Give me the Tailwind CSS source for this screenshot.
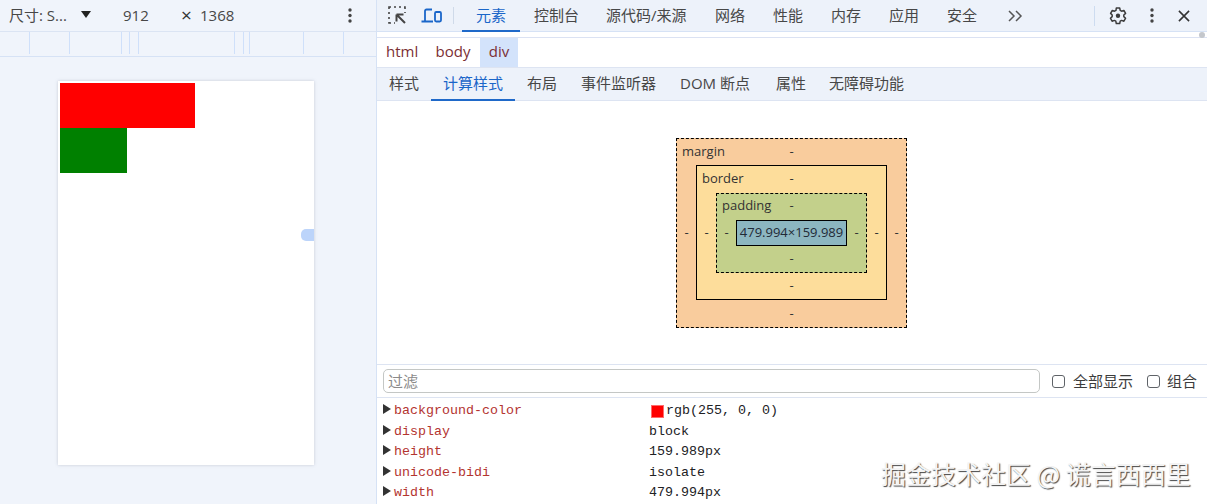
<!DOCTYPE html>
<html lang="en">
  <head>
    <meta charset="UTF-8" />
    <script src="https://cdn.jsdelivr.net/npm/@tailwindcss/browser@4"></script>
    <title>DevTools</title>
  </head>
  <body class="relative flex h-[504px] w-[1207px] overflow-hidden bg-white text-[15px] text-[#474747] font-['Open_Sans','Noto_Sans_CJK_SC',sans-serif]">
    <!-- device pane -->
    <div class="flex h-full w-[376px] flex-col bg-[#f0f4fb]">
      <div class="flex h-[32px] items-center border-b border-[#dbe4f3] pl-[9px]">
        <span class="w-[71px]">尺寸: S...</span>
        <svg class="w-[12px] h-[9px] -translate-y-[1px]" viewBox="0 0 12 9"><path d="M1 1h10L6 8z" fill="#222" /></svg>
        <span class="ml-[31px] w-[58px]">912</span>
        <span class="w-[19px] text-[19px] leading-none text-[#333]">×</span>
        <span>1368</span>
        <svg class="ml-auto mr-[24px] w-[4px] h-[15px]" viewBox="0 0 4 15" fill="#444"><circle cx="2" cy="2" r="1.7" /><circle cx="2" cy="7.5" r="1.7" /><circle cx="2" cy="13" r="1.7" /></svg>
      </div>
      <div class="flex h-[25px] border-b border-[#d6e2f5] pb-[2px]">
        <div class="w-[30px] border-r border-[#cfe0fa]"></div>
        <div class="w-[40px] border-r border-[#cfe0fa]"></div>
        <div class="w-[52px] border-r border-[#cfe0fa]"></div>
        <div class="w-[8px] border-r border-[#cfe0fa]"></div>
        <div class="w-[9px] border-r border-[#cfe0fa]"></div>
        <div class="w-[96px] border-r border-[#cfe0fa]"></div>
        <div class="w-[9px] border-r border-[#cfe0fa]"></div>
        <div class="w-[6px] border-r border-[#cfe0fa]"></div>
        <div class="w-[54px] border-r border-[#cfe0fa]"></div>
        <div class="w-[40px] border-r border-[#cfe0fa]"></div>
      </div>
      <div class="ml-[58px] mt-[24px] h-[384px] w-[256px] bg-white p-[2px] shadow-[0_0_3px_rgba(120,130,150,0.35)]">
        <div class="h-[45px] w-[135px] bg-[#ff0000]"></div>
        <div class="h-[45px] w-[67px] bg-[#008000]"></div>
      </div>
    </div>

    <!-- devtools pane -->
    <div class="flex h-full w-[831px] flex-col border-l border-[#d6e2f5]">
      <div class="flex h-[32px] items-center border-b border-[#d6e2f5] bg-[#edf2fa]">
        <svg class="ml-[11px] w-[19px] h-[19px]" viewBox="0 0 19 19" fill="none" stroke="#444" stroke-width="1.6">
          <path d="M1 3V1h2M6 1h2M11 1h2M16 1h1v2M1 6v2M1 11v2M1 16v1h2M6 17h1M17 6v1" />
          <path d="M8.5 8.5h7M8.5 8.5v7M9 9l8 8" stroke-width="2" />
        </svg>
        <svg class="ml-[14px] w-[21px] h-[16px]" viewBox="0 0 21 16" fill="none" stroke="#1a66c9" stroke-width="1.8">
          <path d="M11 1.5H5.500A1.500 1.500 0 0 0 4 3v10M0.500 13.500H12" />
          <rect x="14" y="4" width="6" height="9.500" rx="1.200" />
        </svg>
        <div class="ml-[11px] h-[17px] w-px bg-[#cfdae9]"></div>
        <div class="relative ml-[8px] flex h-full w-[58px] items-center justify-center text-[#1a66c9]">元素<div class="absolute bottom-[-1px] left-0 right-0 h-[2px] bg-[#1f69c9]"></div></div>
        <span class="ml-[14px] w-[45px]">控制台</span>
        <span class="ml-[27px] w-[81px] whitespace-nowrap">源代码/来源</span>
        <span class="ml-[28px] w-[30px]">网络</span>
        <span class="ml-[28px] w-[30px]">性能</span>
        <span class="ml-[28px] w-[30px]">内存</span>
        <span class="ml-[28px] w-[30px]">应用</span>
        <span class="ml-[28px] w-[30px]">安全</span>
        <svg class="ml-[31px] w-[15px] h-[12px]" viewBox="0 0 15 12" fill="none" stroke="#555" stroke-width="1.500"><path d="M1 1l5 5-5 5M8 1l5 5-5 5" /></svg>
        <div class="ml-[71px] h-[20px] w-px bg-[#cddcf0]"></div>
        <svg class="ml-[14px] w-[18px] h-[18px]" viewBox="0 0 18 18" fill="none" stroke="#3c3c3c" stroke-width="1.500">
          <path d="M7.300 1h3.400l.5 2.400 1.400.8 2.300-.8 1.700 3-1.800 1.600v1.600l1.800 1.600-1.700 3-2.300-.8-1.400.8-.5 2.400H7.300l-.5-2.400-1.400-.8-2.300.8-1.700-3 1.800-1.600V8L1.600 6.400l1.700-3 2.300.8 1.400-.8z" stroke-linejoin="round" />
          <circle cx="9" cy="8.800" r="2.200" fill="#3c3c3c" stroke="none" />
        </svg>
        <svg class="ml-[23px] w-[4px] h-[15px]" viewBox="0 0 4 15" fill="#444"><circle cx="2" cy="2" r="1.700" /><circle cx="2" cy="7.500" r="1.700" /><circle cx="2" cy="13" r="1.700" /></svg>
        <svg class="ml-[24px] w-[12px] h-[12px]" viewBox="0 0 13 13" fill="none" stroke="#333" stroke-width="1.700"><path d="M1 1l11 11M12 1L1 12" /></svg>
      </div>
      <div class="relative h-[6px] border-b border-[#dbe2f3]">
        <div class="absolute right-[2px] top-[0px] h-[6px] w-[6px] rounded-full bg-[#c4c7cc]"></div>
      </div>
      <div class="flex h-[30px] items-stretch border-b border-[#dde4f2] text-[#7b2f34] text-[15px]">
        <div class="flex w-[45px] items-center pb-[2px] pl-[9px]">html</div>
        <div class="flex w-[58px] items-center justify-center pb-[2px] pl-[4px]">body</div>
        <div class="flex w-[38px] items-center justify-center bg-[#d3e3fb] pb-[2px]">div</div>
      </div>
      <div class="flex h-[33px] items-center border-b border-[#dde4f2] bg-[#edf2fa]">
        <span class="ml-[12px] w-[30px] -translate-y-[1px]">样式</span>
        <div class="relative ml-[12px] flex h-full w-[84px] items-center justify-center pb-[2px] text-[#1a66c9]">计算样式<div class="absolute bottom-[-1px] left-0 right-0 h-[2px] bg-[#1f69c9]"></div></div>
        <span class="ml-[12px] w-[30px] -translate-y-[1px]">布局</span>
        <span class="ml-[24px] w-[75px] -translate-y-[1px]">事件监听器</span>
        <span class="ml-[24px] w-[72px] -translate-y-[1px] whitespace-nowrap">DOM 断点</span>
        <span class="ml-[24px] w-[30px] -translate-y-[1px]">属性</span>
        <span class="ml-[23px] w-[75px] -translate-y-[1px]">无障碍功能</span>
      </div>

      <div class="flex flex-1 justify-center pt-[37px] pr-[1px]">
        <div class="flex h-[190px] w-[231px] flex-col border border-dashed border-black bg-[#f9cc9d] text-[13px] text-[#333]">
          <div class="relative flex h-[26px] items-center justify-center"><span class="absolute left-[5px]">margin</span>-</div>
          <div class="flex h-[135px]">
            <div class="flex w-[19px] items-center justify-center">-</div>
            <div class="flex w-[191px] flex-col border border-black bg-[#fddd9b]">
              <div class="relative flex h-[25px] items-center justify-center"><span class="absolute left-[5px]">border</span>-</div>
              <div class="mt-[2px] flex h-[80px]">
                <div class="flex w-[19px] items-center justify-center">-</div>
                <div class="flex w-[151px] flex-col border border-dashed border-black bg-[#c3d08b]">
                  <div class="relative flex h-[24px] items-center justify-center"><span class="absolute left-[5px]">padding</span>-</div>
                  <div class="mt-[2px] flex h-[26px]">
                    <div class="flex w-[19px] items-center justify-center">-</div>
                    <div class="flex w-[111px] items-center justify-center border border-black bg-[#8cb6c0] text-[#1f2a36]">479.994×159.989</div>
                    <div class="flex flex-1 items-center justify-center">-</div>
                  </div>
                  <div class="flex flex-1 items-center justify-center">-</div>
                </div>
                <div class="flex flex-1 items-center justify-center">-</div>
              </div>
              <div class="flex flex-1 items-center justify-center">-</div>
            </div>
            <div class="flex flex-1 items-center justify-center">-</div>
          </div>
          <div class="flex flex-1 items-center justify-center">-</div>
        </div>
      </div>

      <div class="flex h-[34px] items-center border-y border-[#dde4f2] pl-[6px]">
        <div class="flex h-[24px] w-[657px] items-center rounded-[5px] border border-[#c4c7c5] px-[4px] text-[#8a8a8a]">过滤</div>
        <div class="ml-[12px] h-[13px] w-[13px] rounded-[3px] border border-[#5f6368]"></div>
        <span class="ml-[8px] text-[#3c3c3c]">全部显示</span>
        <div class="ml-[14px] h-[13px] w-[13px] rounded-[3px] border border-[#5f6368]"></div>
        <span class="ml-[7px] text-[#3c3c3c]">组合</span>
      </div>
      <div class="grid h-[106px] grid-cols-[266px_1fr] content-start pl-[6px] pt-[3px] text-[13.33px] leading-[20.5px] font-['Liberation_Mono',monospace] text-[#202124]">
        <div class="flex items-center text-[#b3342f]"><span class="mr-[3px] h-0 w-0 -translate-y-[2px] border-y-[5px] border-l-[8px] border-y-transparent border-l-[#333]"></span>background-color</div>
        <div class="flex items-center"><span class="mr-[2px] ml-[2px] h-[13px] w-[13px] border border-[#ff6b6b] bg-[#ff0000]"></span>rgb(255, 0, 0)</div>
        <div class="flex items-center text-[#b3342f]"><span class="mr-[3px] h-0 w-0 -translate-y-[2px] border-y-[5px] border-l-[8px] border-y-transparent border-l-[#333]"></span>display</div>
        <div>block</div>
        <div class="flex items-center text-[#b3342f]"><span class="mr-[3px] h-0 w-0 -translate-y-[2px] border-y-[5px] border-l-[8px] border-y-transparent border-l-[#333]"></span>height</div>
        <div>159.989px</div>
        <div class="flex items-center text-[#b3342f]"><span class="mr-[3px] h-0 w-0 -translate-y-[2px] border-y-[5px] border-l-[8px] border-y-transparent border-l-[#333]"></span>unicode-bidi</div>
        <div>isolate</div>
        <div class="flex items-center text-[#b3342f]"><span class="mr-[3px] h-0 w-0 -translate-y-[2px] border-y-[5px] border-l-[8px] border-y-transparent border-l-[#333]"></span>width</div>
        <div>479.994px</div>
      </div>
    </div>

    <!-- resize handle -->
    <div class="absolute left-[301px] top-[229px] h-[12px] w-[13px] rounded-l-[5px] bg-[#bcd4fa]"></div>
    <!-- watermark -->
    <div class="absolute left-[881px] top-[456px] text-[25px] leading-[34px] whitespace-nowrap text-[#f4f4f4] [text-shadow:1px_1px_1px_#444] font-['Noto_Sans_CJK_SC',sans-serif]">掘金技术社区 @ 谎言西西里</div>
  </body>
</html>
